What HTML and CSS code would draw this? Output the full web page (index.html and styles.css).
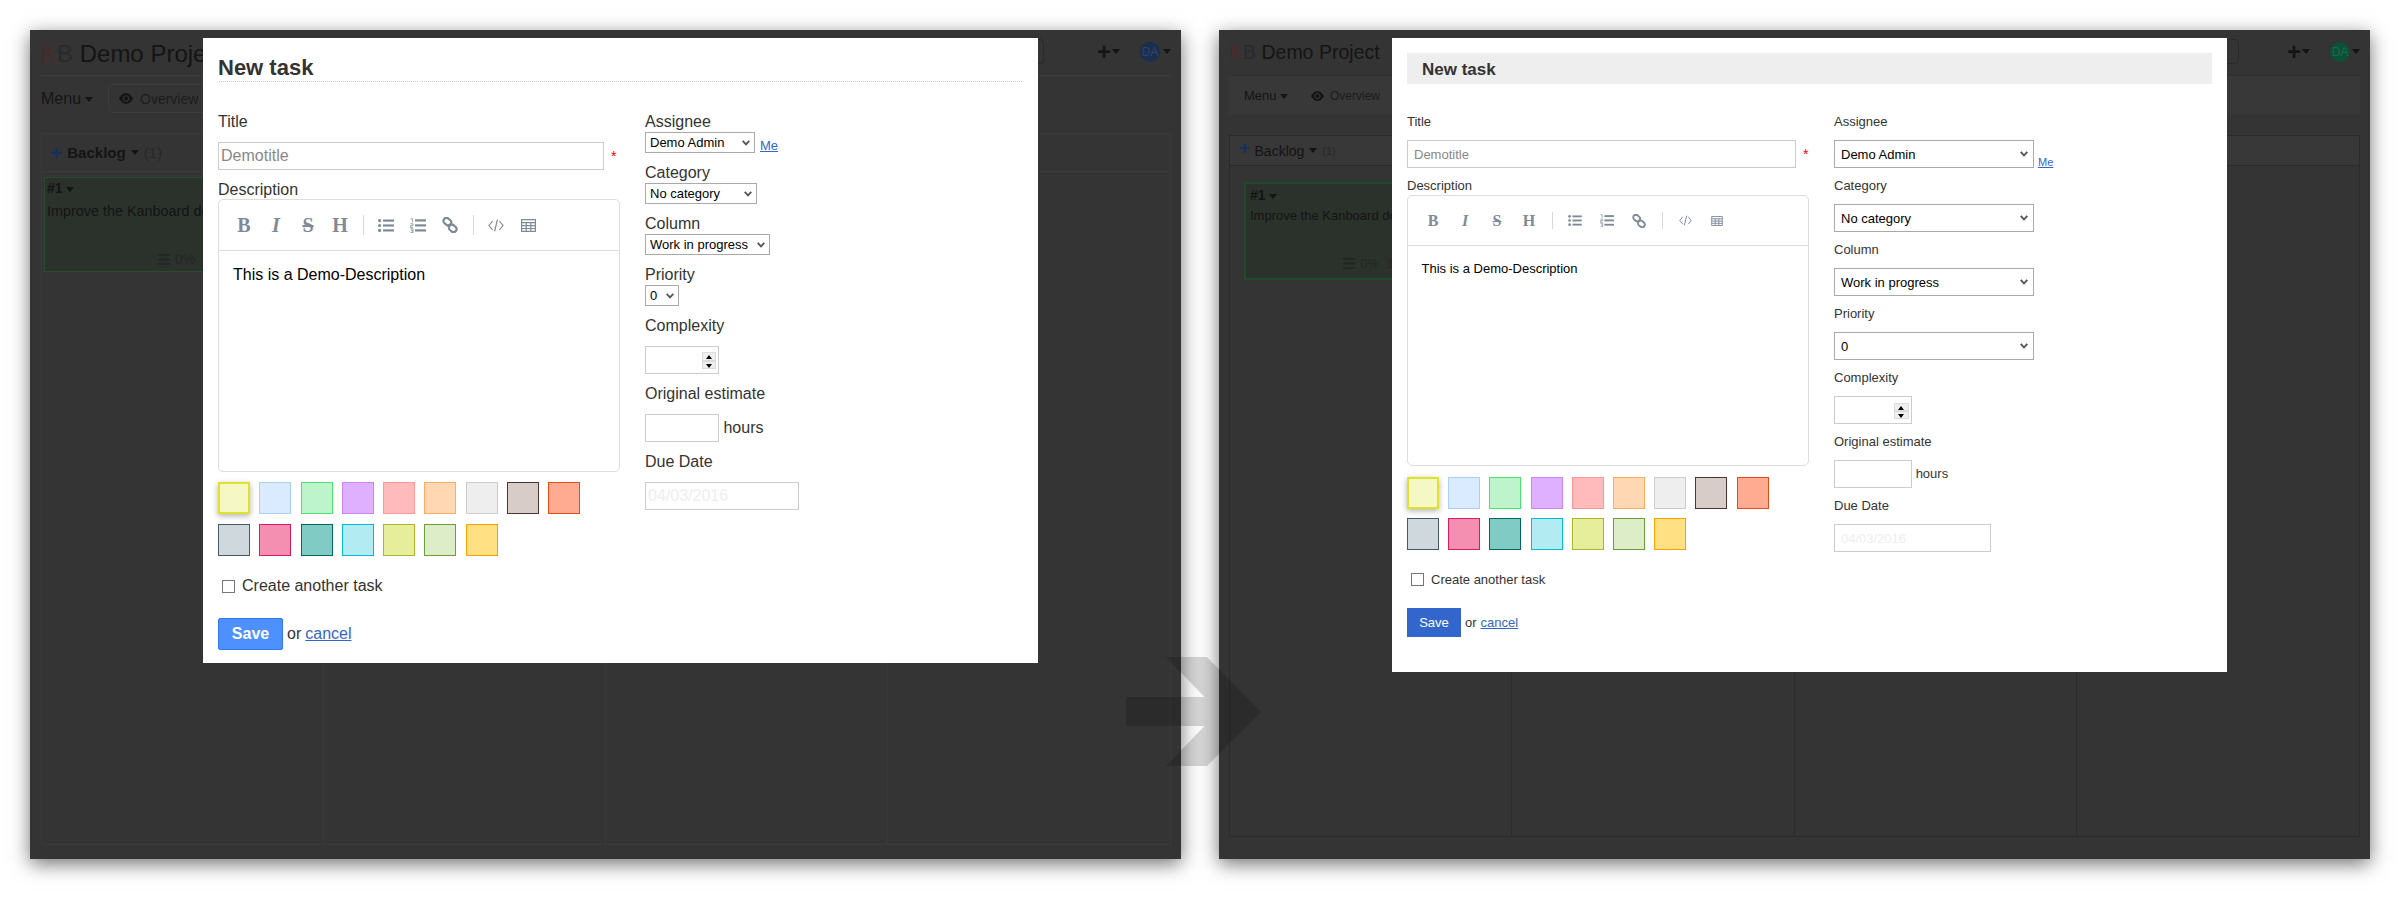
FILE: index.html

```html
<!DOCTYPE html>
<html lang="en">
<head>
    <meta charset="UTF-8">
    <meta name="viewport" content="width=device-width, initial-scale=1.0">
    <title>New task form, before and after</title>
    <link rel="stylesheet" href="styles.css">
</head>
<body>
    <svg class="sprite" aria-hidden="true">
        <symbol id="i-ul" viewBox="0 0 16 13">
            <circle cx="1.6" cy="1.6" r="1.6"/><circle cx="1.6" cy="6.5" r="1.6"/><circle cx="1.6" cy="11.4" r="1.6"/>
            <rect x="5" y="0.5" width="11" height="2.2"/><rect x="5" y="5.4" width="11" height="2.2"/><rect x="5" y="10.3" width="11" height="2.2"/>
        </symbol>
        <symbol id="i-ol" viewBox="0 0 16 15">
            <path d="M.4 .8 H2.400 V4.400 M.4 5.800 H3 V7.600 H.6 V9.600 H3.200 M.4 10.800 H3 V14.600 H.4 M1 12.700 H3" fill="none" stroke="currentColor" stroke-width=".8"/>
            <rect x="5" y="1.300" width="11" height="2.200"/><rect x="5" y="6.300" width="11" height="2.200"/><rect x="5" y="11.300" width="11" height="2.200"/>
        </symbol>
        <symbol id="i-link" viewBox="0 0 16 16">
            <g fill="none" stroke="currentColor" stroke-width="2.2">
                <rect x="1.2" y="1.6" width="8.2" height="6" rx="3" transform="rotate(40 5.3 4.6)"/>
                <rect x="6.6" y="8.4" width="8.2" height="6" rx="3" transform="rotate(40 10.7 11.4)"/>
            </g>
        </symbol>
        <symbol id="i-code" viewBox="0 0 16 13">
            <path d="M4.6 2 L1 6.5 L4.6 11 M11.4 2 L15 6.5 L11.4 11 M9.4 .6 L6.6 12.4" fill="none" stroke="currentColor" stroke-width="1.2"/>
        </symbol>
        <symbol id="i-table" viewBox="0 0 15 13">
            <path d="M.6 .6 H14.4 V12.4 H.6 Z M.6 3.6 H14.4 M.6 6.6 H14.4 M.6 9.5 H14.4 M5.2 3.6 V12.4 M9.8 3.6 V12.4" fill="none" stroke="currentColor" stroke-width="1.2"/>
        </symbol>
        <symbol id="i-eye" viewBox="0 0 16 12">
            <path d="M0 6 C3 1 5.5 0 8 0 S13 1 16 6 C13 11 10.500 12 8 12 S3 11 0 6 Z M8 2.200 A3.800 3.800 0 1 0 8.010 2.200 Z M8 3.500 A2.500 2.500 0 1 1 7.990 3.500 Z"/>
        </symbol>
        <symbol id="i-bars" viewBox="0 0 12 11">
            <rect y="0" width="12" height="2"/><rect y="4.500" width="12" height="2"/><rect y="9" width="12" height="2"/>
        </symbol>
    </svg>

    <!-- old look -->
    <div class="window old">
        <div class="app">
            <div class="app-header">
                <div class="app-title"><span class="logo"><span class="logo-k">K</span>B</span> Demo Project</div>
                <div class="app-tools">
                    <span class="search-box"></span>
                    <span class="tool-plus">+</span><span class="caret"></span>
                    <span class="avatar">DA</span><span class="caret"></span>
                </div>
            </div>
            <div class="app-nav">
                <span class="nav-menu">Menu <span class="caret"></span></span>
                <span class="nav-item"><svg class="eye"><use href="#i-eye"/></svg> Overview</span>
            </div>
            <div class="board">
                <div class="board-col">
                    <div class="col-head"><span class="col-plus">+</span><span class="col-name">Backlog</span><span class="caret"></span><span class="col-count">(1)</span></div>
                    <div class="card">
                        <div class="card-id">#1 <span class="caret"></span></div>
                        <div class="card-title">Improve the Kanboard doc</div>
                        <div class="card-foot"><svg class="bars"><use href="#i-bars"/></svg><span>0%</span><span>1</span></div>
                    </div>
                </div>
                <div class="board-col"><div class="col-head"></div></div>
                <div class="board-col"><div class="col-head"></div></div>
                <div class="board-col"><div class="col-head"></div></div>
            </div>
        </div>

        <div class="modal">
            <h2 class="modal-title">New task</h2>
            <form class="task-form">
                <div class="col-main">
                    <label class="lbl">Title</label>
                    <div class="title-row">
                        <input class="txt title-input" type="text" placeholder="Demotitle">
                        <span class="req">*</span>
                    </div>
                    <label class="lbl desc-lbl">Description</label>
                    <div class="editor">
                        <div class="toolbar">
                            <span class="tb-btn tb-b">B</span>
                            <span class="tb-btn tb-i">I</span>
                            <span class="tb-btn tb-s">S</span>
                            <span class="tb-btn tb-h">H</span>
                            <span class="tb-sep"></span>
                            <span class="tb-btn"><svg class="ic-ul"><use href="#i-ul"/></svg></span>
                            <span class="tb-btn"><svg class="ic-ol"><use href="#i-ol"/></svg></span>
                            <span class="tb-btn"><svg class="ic-link"><use href="#i-link"/></svg></span>
                            <span class="tb-sep"></span>
                            <span class="tb-btn"><svg class="ic-code"><use href="#i-code"/></svg></span>
                            <span class="tb-btn"><svg class="ic-table"><use href="#i-table"/></svg></span>
                        </div>
                        <div class="editor-text">This is a Demo-Description</div>
                    </div>
                    <div class="swatches">
                        <span class="sw sw-yellow"></span><span class="sw sw-blue"></span><span class="sw sw-green"></span>
                        <span class="sw sw-purple"></span><span class="sw sw-red"></span><span class="sw sw-orange"></span>
                        <span class="sw sw-grey"></span><span class="sw sw-brown"></span><span class="sw sw-deep"></span>
                        <span class="sw sw-dark"></span><span class="sw sw-pink"></span><span class="sw sw-teal"></span>
                        <span class="sw sw-cyan"></span><span class="sw sw-lime"></span><span class="sw sw-lgreen"></span>
                        <span class="sw sw-amber"></span>
                    </div>
                    <label class="another"><input type="checkbox"> Create another task</label>
                    <div class="actions"><button type="button" class="save">Save</button> or <a href="#">cancel</a></div>
                </div>
                <div class="col-side">
                    <div class="field sel-field">
                        <label class="lbl">Assignee</label>
                        <div class="me-row"><select class="sel w-assignee"><option>Demo Admin</option></select><a href="#" class="me">Me</a></div>
                    </div>
                    <div class="field sel-field">
                        <label class="lbl">Category</label>
                        <select class="sel w-category"><option>No category</option></select>
                    </div>
                    <div class="field sel-field">
                        <label class="lbl">Column</label>
                        <select class="sel w-column"><option>Work in progress</option></select>
                    </div>
                    <div class="field sel-field">
                        <label class="lbl">Priority</label>
                        <select class="sel w-priority"><option>0</option></select>
                    </div>
                    <div class="field">
                        <label class="lbl">Complexity</label>
                        <div class="num-wrap">
                            <input class="txt num" type="number">
                            <span class="spin"><span class="spin-up"></span><span class="spin-down"></span></span>
                        </div>
                    </div>
                    <div class="field">
                        <label class="lbl">Original estimate</label>
                        <input class="txt short" type="text"> <span class="hours">hours</span>
                    </div>
                    <div class="field">
                        <label class="lbl">Due Date</label>
                        <input class="txt date" type="text" placeholder="04/03/2016">
                    </div>
                </div>
            </form>
        </div>
    </div>

    <!-- new look -->
    <div class="window new">
        <div class="app">
            <div class="app-header">
                <div class="app-title"><span class="logo"><span class="logo-k">K</span>B</span> Demo Project</div>
                <div class="app-tools">
                    <span class="search-box"></span>
                    <span class="tool-plus">+</span><span class="caret"></span>
                    <span class="avatar">DA</span><span class="caret"></span>
                </div>
            </div>
            <div class="app-nav">
                <span class="nav-menu">Menu <span class="caret"></span></span>
                <span class="nav-item"><svg class="eye"><use href="#i-eye"/></svg> Overview</span>
            </div>
            <div class="board">
                <div class="board-col">
                    <div class="col-head"><span class="col-plus">+</span><span class="col-name">Backlog</span><span class="caret"></span><span class="col-count">(1)</span></div>
                    <div class="card">
                        <div class="card-id">#1 <span class="caret"></span></div>
                        <div class="card-title">Improve the Kanboard doc</div>
                        <div class="card-foot"><svg class="bars"><use href="#i-bars"/></svg><span>0%</span><span>1</span></div>
                    </div>
                </div>
                <div class="board-col"><div class="col-head"></div></div>
                <div class="board-col"><div class="col-head"></div></div>
                <div class="board-col"><div class="col-head"></div></div>
            </div>
        </div>

        <div class="modal">
            <h2 class="modal-title">New task</h2>
            <form class="task-form">
                <div class="col-main">
                    <label class="lbl">Title</label>
                    <div class="title-row">
                        <input class="txt title-input" type="text" placeholder="Demotitle">
                        <span class="req">*</span>
                    </div>
                    <label class="lbl desc-lbl">Description</label>
                    <div class="editor">
                        <div class="toolbar">
                            <span class="tb-btn tb-b">B</span>
                            <span class="tb-btn tb-i">I</span>
                            <span class="tb-btn tb-s">S</span>
                            <span class="tb-btn tb-h">H</span>
                            <span class="tb-sep"></span>
                            <span class="tb-btn"><svg class="ic-ul"><use href="#i-ul"/></svg></span>
                            <span class="tb-btn"><svg class="ic-ol"><use href="#i-ol"/></svg></span>
                            <span class="tb-btn"><svg class="ic-link"><use href="#i-link"/></svg></span>
                            <span class="tb-sep"></span>
                            <span class="tb-btn"><svg class="ic-code"><use href="#i-code"/></svg></span>
                            <span class="tb-btn"><svg class="ic-table"><use href="#i-table"/></svg></span>
                        </div>
                        <div class="editor-text">This is a Demo-Description</div>
                    </div>
                    <div class="swatches">
                        <span class="sw sw-yellow"></span><span class="sw sw-blue"></span><span class="sw sw-green"></span>
                        <span class="sw sw-purple"></span><span class="sw sw-red"></span><span class="sw sw-orange"></span>
                        <span class="sw sw-grey"></span><span class="sw sw-brown"></span><span class="sw sw-deep"></span>
                        <span class="sw sw-dark"></span><span class="sw sw-pink"></span><span class="sw sw-teal"></span>
                        <span class="sw sw-cyan"></span><span class="sw sw-lime"></span><span class="sw sw-lgreen"></span>
                        <span class="sw sw-amber"></span>
                    </div>
                    <label class="another"><input type="checkbox"> Create another task</label>
                    <div class="actions"><button type="button" class="save">Save</button> or <a href="#">cancel</a></div>
                </div>
                <div class="col-side">
                    <div class="field sel-field">
                        <label class="lbl">Assignee</label>
                        <div class="me-row"><select class="sel w-assignee"><option>Demo Admin</option></select><a href="#" class="me">Me</a></div>
                    </div>
                    <div class="field sel-field">
                        <label class="lbl">Category</label>
                        <select class="sel w-category"><option>No category</option></select>
                    </div>
                    <div class="field sel-field">
                        <label class="lbl">Column</label>
                        <select class="sel w-column"><option>Work in progress</option></select>
                    </div>
                    <div class="field sel-field">
                        <label class="lbl">Priority</label>
                        <select class="sel w-priority"><option>0</option></select>
                    </div>
                    <div class="field">
                        <label class="lbl">Complexity</label>
                        <div class="num-wrap">
                            <input class="txt num" type="number">
                            <span class="spin"><span class="spin-up"></span><span class="spin-down"></span></span>
                        </div>
                    </div>
                    <div class="field">
                        <label class="lbl">Original estimate</label>
                        <input class="txt short" type="text"> <span class="hours">hours</span>
                    </div>
                    <div class="field">
                        <label class="lbl">Due Date</label>
                        <input class="txt date" type="text" placeholder="04/03/2016">
                    </div>
                </div>
            </form>
        </div>
    </div>

    <svg class="big-arrow" viewBox="0 0 135 109" aria-hidden="true">
        <path d="M0 40 H78.500 L40 0 H81 L135 55 L81 109 H40 L78.500 69 H0 Z"/>
    </svg>
</body>
</html>
```

FILE: styles.css

```css
html, body { margin: 0; height: 100%; }
body {
    position: relative;
    display: flex;
    gap: 38px;
    box-sizing: border-box;
    height: 915px;
    padding: 30px 30px 56px;
    overflow: hidden;
    background: #fff;
    font-family: "Liberation Sans", Arial, sans-serif;
    color: #333;
}
.sprite { display: none; }

.window {
    position: relative;
    width: 1151px;
    height: 829px;
    overflow: hidden;
    background: #343434;
    box-shadow: 0 5px 18px rgba(0, 0, 0, .55);
}
.big-arrow {
    position: absolute;
    left: 1126px;
    top: 657px;
    width: 135px;
    height: 109px;
    fill: rgba(0, 0, 0, .16);
}

/* app behind the overlay */
.app { color: #141414; }
.caret {
    display: inline-block;
    width: 0;
    height: 0;
    border: 4px solid transparent;
    border-top: 5px solid #141414;
    border-bottom: 0;
    vertical-align: middle;
}
.app-header { display: flex; justify-content: space-between; box-sizing: border-box; }
.logo { color: #2a2a2a; }
.logo-k { color: #4d2828; }
.app-tools { display: flex; align-items: center; }
.search-box { width: 200px; height: 25px; border: 1px solid #2a2a2a; border-radius: 4px; box-sizing: border-box; }
.tool-plus { font-size: 24px; font-weight: bold; line-height: 20px; }
.avatar {
    width: 20px;
    height: 20px;
    border-radius: 50%;
    font-size: 12px;
    line-height: 20px;
    text-align: center;
}
.app-nav { display: flex; align-items: center; box-sizing: border-box; }
.nav-item { display: flex; align-items: center; box-sizing: border-box; color: #1c1c1c; }
.eye { fill: #141414; }
.board { display: grid; grid-template-columns: repeat(4, 1fr); box-sizing: border-box; }
.board-col { box-sizing: border-box; min-width: 0; }
.board-col:last-child { border-right: 0 !important; }
.col-head { display: flex; align-items: center; box-sizing: border-box; }
.col-plus { color: #12305c; font-weight: bold; line-height: 1; }
.col-count { color: #272727; }
.card { box-sizing: border-box; display: flex; flex-direction: column; background: #2a322b; }
.card-id { font-weight: bold; }
.card-title { white-space: nowrap; }
.card-foot { display: flex; align-items: center; margin-top: auto; color: #252525; fill: #252525; }

/* modal */
.modal { position: absolute; top: 8px; left: 173px; box-sizing: border-box; width: 835px; background: #fff; padding: 0 15px; }
.modal-title { margin: 0; font-weight: bold; color: #333; }
.task-form { display: flex; }
.col-main { width: 402px; }
.lbl { display: block; height: 18px; line-height: 18px; }
.title-row { display: flex; align-items: center; }
.txt {
    box-sizing: border-box;
    height: 28px;
    margin: 0;
    padding: 0 2px;
    border: 1px solid #ccc;
    border-radius: 0;
    outline: 0;
    font-family: inherit;
    font-size: inherit;
    color: #333;
    vertical-align: top;
}
.title-input::placeholder { color: #888; opacity: 1; }
.date::placeholder { color: #eee; opacity: 1; }
.num { -moz-appearance: textfield; }
.num::-webkit-inner-spin-button { display: none; }
.num-wrap { position: relative; display: inline-block; vertical-align: top; }
.spin {
    position: absolute;
    right: 3px;
    top: 6px;
    display: flex;
    flex-direction: column;
    gap: 2px;
    box-sizing: border-box;
    width: 14px;
    height: 17px;
    padding: 1px;
    background: #dcdcdc;
}
.spin-up, .spin-down { position: relative; flex: 1; background: #efefef; }
.spin-up::after, .spin-down::after {
    content: "";
    position: absolute;
    left: 3px;
    top: 2px;
    border: 3px solid transparent;
}
.spin-up::after { border-bottom: 4px solid #000; border-top: 0; }
.spin-down::after { border-top: 4px solid #000; border-bottom: 0; }
.hours { line-height: 28px; margin-left: 0; }
.req { margin-left: 7px; color: #f00; font-size: 14px; line-height: 14px; }

.editor { box-sizing: border-box; border: 1px solid #ddd; border-radius: 5px; color: #000; }
.toolbar { display: flex; align-items: center; box-sizing: border-box; border-bottom: 1px solid #ddd; padding-left: 9px; color: #7f8a98; fill: #7f8a98; }
.tb-btn { display: flex; justify-content: center; align-items: center; width: 32px; font-family: "Liberation Serif", serif; font-weight: bold; }
.tb-i { font-style: italic; }
.tb-s { text-decoration: line-through; }
.tb-sep { width: 1px; margin: 0 6.5px; background: #d9d9d9; }

.swatches { display: flex; flex-wrap: wrap; width: 385px; }
.sw { box-sizing: border-box; width: 32px; height: 32px; border: 1px solid; }
.sw-yellow { background: #f5f7c4; border: 2px solid #dfe32d; box-shadow: 0 2px 6px rgba(0, 0, 0, .3); }
.sw-blue { background: #dbebff; border-color: #a8cfff; }
.sw-green { background: #bdf4cb; border-color: #4ae371; }
.sw-purple { background: #dfb0ff; border-color: #cd85fe; }
.sw-red { background: #ffbbbb; border-color: #ff9797; }
.sw-orange { background: #ffd7b3; border-color: #ffac62; }
.sw-grey { background: #eeeeee; border-color: #cccccc; }
.sw-brown { background: #d7ccc8; border-color: #4e342e; }
.sw-deep { background: #ffab91; border-color: #e64a19; }
.sw-dark { background: #cfd8dc; border-color: #455a64; }
.sw-pink { background: #f48fb1; border-color: #d81b60; }
.sw-teal { background: #80cbc4; border-color: #00695c; }
.sw-cyan { background: #b2ebf2; border-color: #00bcd4; }
.sw-lime { background: #e6ee9c; border-color: #afb42b; }
.sw-lgreen { background: #dcedc8; border-color: #689f38; }
.sw-amber { background: #ffe082; border-color: #ffa000; }

.another { display: flex; align-items: center; height: 18px; padding-left: 4px; }
.another input { appearance: none; box-sizing: border-box; width: 13px; height: 13px; margin: 0 7px 0 0; border: 1px solid #767676; background: #fff; }
.actions { display: flex; align-items: center; }
.actions a, .me { color: #3366cc; }
.actions a { margin-left: 4px; }
.save { box-sizing: border-box; margin: 0 4px 0 0; padding: 0; font-family: inherit; color: #fff; cursor: pointer; }

.col-side { margin-left: 25px; }
.sel {
    appearance: none;
    box-sizing: border-box;
    margin: 0;
    border: 1px solid #a9a9a9;
    border-radius: 0;
    background: #fff url("data:image/svg+xml,%3Csvg xmlns='http://www.w3.org/2000/svg' width='8' height='6'%3E%3Cpath d='M.7 .8 L4 4.400 L7.300 .8' fill='none' stroke='%23555' stroke-width='1.800'/%3E%3C/svg%3E") no-repeat;
    color: #000;
    font-family: inherit;
    vertical-align: top;
}
.me-row { display: flex; align-items: flex-end; }
.date { display: block; }

/* old look: 16px text, default browser selects */
.old .app { padding: 0 10px 0 11px; }
.old .app-header { height: 46px; border-bottom: 1px solid #3c3c3c; }
.old .app-title { font-size: 24px; line-height: 48px; }
.old .app-tools { padding-bottom: 2px; }
.old .search-box { margin-right: 53px; }
.old .tool-plus { margin-right: 1px; }
.old .avatar { margin-left: 20px; margin-right: 3px; background: #1a2e52; color: #33445c; }
.old .app-nav { height: 29px; margin: 8px 0 20px; font-size: 16px; }
.old .nav-menu { width: 67px; }
.old .nav-item { height: 29px; padding: 0 12px 0 10px; gap: 7px; border: 1px solid #3c3c3c; border-radius: 4px; font-size: 14px; }
.old .eye { width: 14px; height: 11px; }
.old .board { height: 712px; border: 1px solid #393939; }
.old .board-col { border-right: 1px solid #393939; }
.old .col-head { height: 38px; gap: 5px; padding: 0 8px; border-bottom: 1px solid #393939; font-size: 15px; }
.old .col-plus { font-size: 21px; }
.old .col-name { font-weight: bold; }
.old .col-count { font-size: 15px; }
.old .card { width: 277px; height: 95px; margin: 5px 0 0 2px; padding: 1px 2px; border: 1px solid #2a4a33; font-size: 14.4px; }
.old .card-title { margin-top: 5px; line-height: 18px; }
.old .card-id { font-size: 14px; line-height: 18px; }
.old .card-foot { gap: 5px; padding: 0 0 3px 111px; font-size: 14px; }
.old .card-foot span + span { margin-left: 3px; }
.old .bars { width: 12px; height: 11px; }

.old .modal { height: 625px; font-size: 16px; }
.old .modal-title { margin-top: 14px; height: 29px; border-bottom: 1px solid; border-image: repeating-linear-gradient(90deg, #ccc 0 1px, #fff 1px 2px) 1; font-size: 22px; line-height: 32px; }
.old .task-form { margin-top: 31px; }
.old .title-row { margin-top: 11px; }
.old .title-input { width: 386px; }
.old .desc-lbl { margin-top: 11px; }
.old .editor { height: 273px; }
.old .toolbar { height: 51px; font-size: 20px; }
.old .tb-sep { height: 20px; }
.old .ic-ul { width: 16px; height: 13px; }
.old .ic-ol { width: 16px; height: 15px; }
.old .ic-link { width: 16px; height: 16px; }
.old .ic-code { width: 16px; height: 13px; }
.old .ic-table { width: 15px; height: 13px; }
.old .editor-text { padding: 15px 14px; line-height: 18px; }
.old .swatches { gap: 10px 9.3px; margin-top: 10px; }
.old .another { margin-top: 21px; }
.old .actions { margin-top: 23px; }
.old .save { width: 65px; height: 32px; border: 1px solid #3079ed; border-radius: 2px; background: #4d90fe; font-size: 16px; font-weight: bold; }
.old .field { margin-bottom: 11px; }
.old .field .lbl { margin-bottom: 11px; }
.old .sel-field .lbl { margin-bottom: 1px; }
.old .sel { height: 21px; padding: 0 0 0 4px; font-size: 13px; background-position: right 4px center; }
.old .w-assignee { width: 110px; }
.old .w-category { width: 112px; }
.old .w-column { width: 125px; }
.old .w-priority { width: 34px; }
.old .me { margin-left: 5px; font-size: 13px; }
.old .num, .old .short { width: 74px; }
.old .date { width: 154px; }

/* new look: 13px text, full-width selects */
.new .app { padding: 0 10px; }
.new .app-header { height: 45px; padding-right: 0; }
.new .app-title { font-size: 19.500px; line-height: 44px; padding-left: 1px; }
.new .app-tools { padding-bottom: 2px; }
.new .search-box { margin-right: 48px; }
.new .tool-plus { margin-right: 1px; }
.new .avatar { margin-left: 20px; margin-right: 2px; background: #0b5037; color: #1c6a4e; }
.new .app-nav { height: 40px; margin-bottom: 20px; padding-left: 15px; background: #383838; border-top: 1px solid #2f2f2f; font-size: 13px; }
.new .nav-menu { width: 67px; }
.new .nav-item { gap: 6px; font-size: 12px; }
.new .eye { width: 13px; height: 10px; }
.new .board { height: 702px; border: 1px solid #2b2b2b; }
.new .board-col { border-right: 1px solid #2b2b2b; }
.new .col-head { height: 30px; gap: 5px; padding: 0 9px; background: #383838; border-bottom: 1px solid #2b2b2b; font-size: 14px; }
.new .col-plus { margin-bottom: 6px; font-size: 18px; }
.new .col-count { font-size: 11px; }
.new .card { width: 255px; height: 98px; margin: 16px 0 0 14px; padding: 2px 4px; border: 2px solid #1f4a2c; font-size: 13px; }
.new .card-title { margin-top: 3px; line-height: 18px; }
.new .card-id { font-size: 14px; line-height: 18px; }
.new .card-foot { gap: 5px; padding: 0 0 5px 93px; font-size: 13px; }
.new .card-foot span + span { margin-left: 3px; }
.new .bars { width: 12px; height: 11px; }

.new .modal { height: 634px; font-size: 13px; }
.new .modal-title { margin-top: 15px; height: 31px; padding-left: 15px; background: #eee; font-size: 17px; line-height: 33px; }
.new .task-form { margin-top: 29px; }
.new .title-row { margin-top: 9px; }
.new .title-input { width: 389px; padding: 0 6px; }
.new .desc-lbl { margin-top: 9px; }
.new .editor { height: 271px; }
.new .toolbar { height: 50px; font-size: 16px; }
.new .tb-sep { height: 17px; }
.new .ic-ul { width: 14px; height: 11px; }
.new .ic-ol { width: 14px; height: 13px; }
.new .ic-link { width: 14px; height: 14px; }
.new .ic-code { width: 13px; height: 11px; }
.new .ic-table { width: 12px; height: 10px; }
.new .editor-text { padding: 14px 13.500px; line-height: 18px; }
.new .swatches { gap: 9px 9.200px; margin-top: 11px; }
.new .another { margin-top: 20px; }
.new .actions { margin-top: 20px; }
.new .save { width: 54px; height: 29px; border: 0; background: #3366cc; font-size: 13px; }
.new .field { margin-bottom: 9px; }
.new .field .lbl { margin-bottom: 9px; }
.new .sel { width: 200px; height: 28px; padding: 0 0 0 6px; font-size: 13px; background-position: right 5px center; }
.new .me { margin-left: 4px; font-size: 11px; }
.new .num, .new .short { width: 78px; }
.new .spin { top: 7px; height: 16px; width: 15px; }
.new .date { width: 157px; padding: 0 6px; }
```
